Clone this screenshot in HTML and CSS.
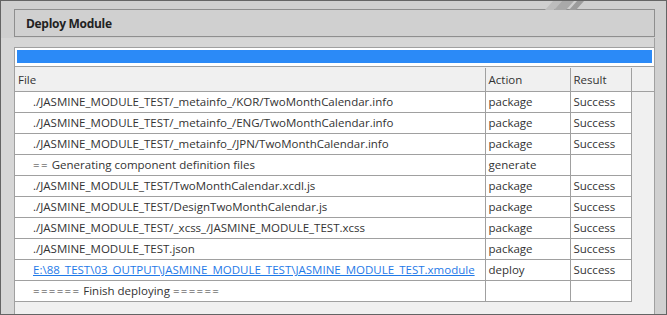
FILE: index.html
```html
<!DOCTYPE html>
<html>
<head>
<meta charset="utf-8">
<link rel="stylesheet" href="styles.css">
</head>
<body>
<div class="window">
  <div class="header">
    <svg class="deco" width="60" height="9" viewBox="0 0 60 9">
      <polygon points="9,9 17,0 26,0 18,9" fill="#bdbdbd"/>
      <polygon points="18,9 26,0 38,0 30,9" fill="#a9a9a9"/>
      <polygon points="33,9 41,0 48,0 40,9" fill="#9c9c9c"/>
    </svg>
    <div class="title-box"><span class="title">Deploy Module</span></div>
  </div>
  <div class="body">
    <div class="panel">
      <div class="progress"><div class="bar"></div></div>
      <table class="grid">
        <thead>
          <tr><th class="c-file">File</th><th class="c-act">Action</th><th class="c-res">Result</th><th class="c-fill"></th></tr>
        </thead>
        <tbody>
          <tr><td class="ind">./JASMINE_MODULE_TEST/_metainfo_/KOR/TwoMonthCalendar.info</td><td>package</td><td>Success</td><td class="c-fill"></td></tr>
          <tr><td class="ind">./JASMINE_MODULE_TEST/_metainfo_/ENG/TwoMonthCalendar.info</td><td>package</td><td>Success</td><td class="c-fill"></td></tr>
          <tr><td class="ind">./JASMINE_MODULE_TEST/_metainfo_/JPN/TwoMonthCalendar.info</td><td>package</td><td>Success</td><td class="c-fill"></td></tr>
          <tr><td class="ind"><span class="eq">==</span> Generating component definition files</td><td>generate</td><td></td><td class="c-fill"></td></tr>
          <tr><td class="ind">./JASMINE_MODULE_TEST/TwoMonthCalendar.xcdl.js</td><td>package</td><td>Success</td><td class="c-fill"></td></tr>
          <tr><td class="ind">./JASMINE_MODULE_TEST/DesignTwoMonthCalendar.js</td><td>package</td><td>Success</td><td class="c-fill"></td></tr>
          <tr><td class="ind">./JASMINE_MODULE_TEST/_xcss_/JASMINE_MODULE_TEST.xcss</td><td>package</td><td>Success</td><td class="c-fill"></td></tr>
          <tr><td class="ind">./JASMINE_MODULE_TEST.json</td><td>package</td><td>Success</td><td class="c-fill"></td></tr>
          <tr><td class="ind"><a class="link" href="#">E:\88_TEST\03_OUTPUT\JASMINE_MODULE_TEST\JASMINE_MODULE_TEST.xmodule</a></td><td>deploy</td><td>Success</td><td class="c-fill"></td></tr>
          <tr><td class="ind"><span class="eq">======</span> Finish deploying <span class="eq">======</span></td><td></td><td></td><td class="c-fill"></td></tr>
        </tbody>
      </table>
    </div>
    <div class="strip"></div>
  </div>
</div>
</body>
</html>
```
FILE: styles.css
```css
* { box-sizing: border-box; }
html, body { margin: 0; padding: 0; }
body {
  width: 667px;
  height: 315px;
  overflow: hidden;
  font-family: "Open Sans", "Noto Sans", sans-serif;
  font-size: 11.5px;
  color: #333;
  background: #d8d8d8;
}
.window {
  width: 667px;
  height: 315px;
  border: 1px solid #646464;
  display: flex;
  flex-direction: column;
  background: #d6d6d6;
}
.header {
  position: relative;
  height: 37px;
  flex: none;
  background: #cfcfcf;
  padding: 8px 11px 0 13px;
}
.deco {
  position: absolute;
  top: 0;
  left: 535px;
}
.title-box {
  height: 28px;
  border: 1px solid #8e8e8e;
  background: #d0d0d0;
  display: flex;
  align-items: center;
  padding-left: 11px;
}
.title {
  font-weight: bold;
  font-size: 12px;
  color: #222;
  letter-spacing: -0.3px;
}
.body {
  flex: 1;
  display: flex;
  padding-top: 9px;
  background: #d6d6d6;
}
.panel {
  margin-left: 13px;
  width: 640px;
  flex: none;
  background: #f0f0f0;
  border-left: 1px solid #a0a0a0;
  border-top: 1px solid #a0a0a0;
}
.strip {
  flex: 1;
  border-left: 1px solid #a0a0a0;
  background: #d0d0d0;
  margin-top: -9px;
}
.progress {
  background: #fff;
  border-bottom: 1px solid #a0a0a0;
  height: 19px;
  padding: 2px 2px 3px 2px;
}
.bar {
  height: 13px;
  background: #2b8af7;
}
.grid {
  border-collapse: collapse;
  table-layout: fixed;
  width: 639px;
  margin-top: 1px;
}
.grid th, .grid td {
  height: 21px;
  padding: 0 0 0 3px;
  border: 1px solid #a0a0a0;
  text-align: left;
  font-weight: normal;
  white-space: nowrap;
  overflow: hidden;
  vertical-align: middle;
  line-height: 19px;
}
.grid th {
  height: 23px;
  background: #f0f0f0;
  border-top: none;
}
.grid td { background: #fff; }
.grid th:first-child, .grid td:first-child { border-left: none; }
.c-file { width: 470px; }
.c-act { width: 85px; }
.c-res { width: 61px; }
.grid th.c-fill { width: 23px; border-right: none; }
.grid td.c-fill { background: #f0f0f0; border: none; }
.grid td.ind { padding-left: 18px; }
.eq { letter-spacing: 1.3px; }
.link { color: #1f7ae8; text-decoration: underline; }
```
